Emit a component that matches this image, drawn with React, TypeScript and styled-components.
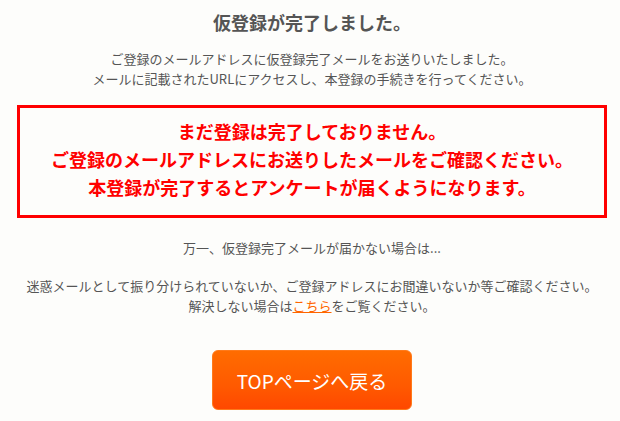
import React from 'react'
import styled, { createGlobalStyle } from 'styled-components'

const GlobalStyle = createGlobalStyle`
  html, body {
    margin: 0;
    padding: 0;
    background: #fdfdfb;
  }
  body {
    font-family: "Noto Sans CJK JP", "Noto Sans", sans-serif;
    color: #555;
  }
`

const App: React.FC = () => {
  return (
    <Page>
      <GlobalStyle />
      <Title>仮登録が完了しました。</Title>
      <Lead>
        ご登録のメールアドレスに仮登録完了メールをお送りいたしました。<br />
        メールに記載されたURLにアクセスし、本登録の手続きを行ってください。
      </Lead>

      <Notice>
        <NoticeLine>まだ登録は完了しておりません。</NoticeLine>
        <NoticeLine>ご登録のメールアドレスにお送りしたメールをご確認ください。</NoticeLine>
        <NoticeLine>本登録が完了するとアンケートが届くようになります。</NoticeLine>
      </Notice>

      <Help $gap={20}>万一、仮登録完了メールが届かない場合は...</Help>
      <Help $gap={18}>
        迷惑メールとして振り分けられていないか、ご登録アドレスにお間違いないか等ご確認ください。<br />
        解決しない場合は<HelpLink href="#">こちら</HelpLink>をご覧ください。
      </Help>

      <ButtonRow>
        <TopButton href="#">TOPページへ戻る</TopButton>
      </ButtonRow>
    </Page>
  )
}

export default App

const Page = styled.div`
  width: 620px;
  height: 421px;
  padding-top: 9px;
  box-sizing: border-box;
  display: flex;
  flex-direction: column;
  align-items: stretch;
`

const Title = styled.h1`
  margin: 0 0 0 4px;
  font-size: 18px;
  line-height: 26px;
  font-weight: 700;
  text-align: center;
  color: #555;
`

const Lead = styled.p`
  margin: 14px 0 0 4px;
  font-size: 13px;
  line-height: 20px;
  text-align: center;
  color: #555;
`

const Notice = styled.div`
  margin: 16px 13px 0 17px;
  height: 113px;
  box-sizing: border-box;
  border: 3px solid #ff0000;
  padding-top: 9px;
  display: flex;
  flex-direction: column;
  align-items: center;
`

const NoticeLine = styled.p`
  margin: 0;
  font-size: 18px;
  line-height: 28px;
  font-weight: 700;
  color: #ff0000;
  text-align: center;
`

const Help = styled.p<{ $gap?: number }>`
  margin: ${p => p.$gap ?? 18}px 0 0 4px;
  font-size: 13px;
  line-height: 20px;
  text-align: center;
  color: #555;
`

const HelpLink = styled.a`
  color: #ff6600;
  text-decoration: underline;
`

const ButtonRow = styled.div`
  margin-top: 34px;
  display: flex;
  justify-content: center;
  padding-left: 4px;
`

const TopButton = styled.a`
  width: 200px;
  height: 60px;
  box-sizing: border-box;
  display: flex;
  align-items: center;
  justify-content: center;
  border-radius: 6px;
  border: 1px solid #ff7a1a;
  background: linear-gradient(to bottom, #ff6c00 0%, #ff5a00 60%, #ff4800 100%);
  color: #fff;
  font-size: 19px;
  text-decoration: none;
`
